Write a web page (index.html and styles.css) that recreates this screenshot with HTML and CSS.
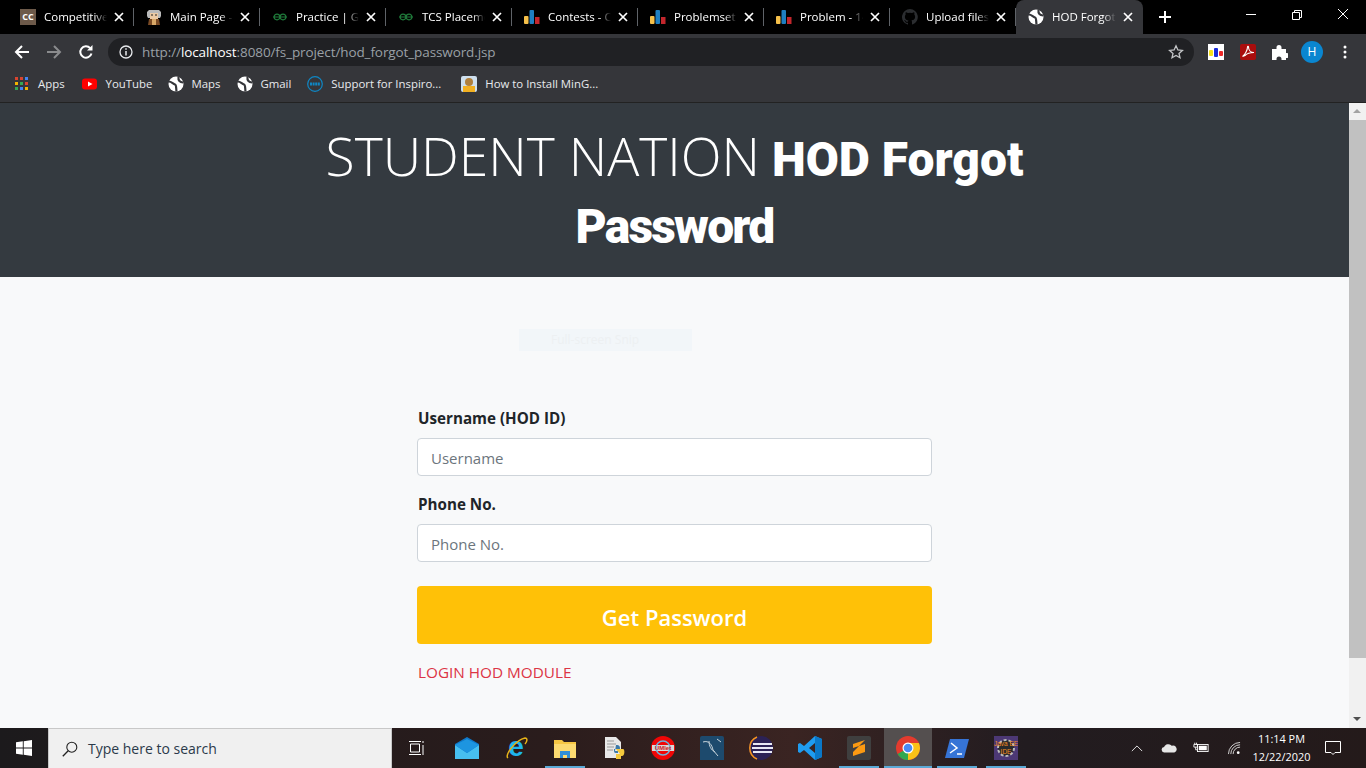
FILE: index.html
```html
<!DOCTYPE html>
<html lang="en">
<head>
    <meta charset="UTF-8">
    <meta name="viewport" content="width=device-width, initial-scale=1.0">
    <title>HOD Forgot Password</title>
    <link rel="stylesheet" href="styles.css">
</head>
<body>
    <svg class="defs" width="0" height="0">
        <symbol id="x" viewBox="0 0 10 10"><path d="M1 1l8 8M9 1l-8 8" stroke="#fff" stroke-width="1.7" fill="none"/></symbol>
        <symbol id="globe" viewBox="0 0 16 16"><circle cx="8" cy="8" r="7.500" fill="#fff"/><path d="M.8 5.500C3.500 5.500 5 8 7 8.500c1.500.5 1 3.500 1.500 7M15 6.500c-3 0-5-2-4.500-5.500" stroke="#35363a" stroke-width="2.200" fill="none"/></symbol>
        <symbol id="gfg" viewBox="0 0 16 16"><path d="M1 8h14M8 8c-.7-4-5.500-3.500-6 0 .5 3.500 5.300 4 6 0 .7 4 5.500 3.500 6 0-.5-3.500-5.300-4-6 0" stroke="#1f7a3a" stroke-width="1.200" fill="none"/></symbol>
        <symbol id="bars" viewBox="0 0 16 16"><rect y="7" width="4.500" height="8" rx="1" fill="#f5c04a"/><rect x="5.500" y="1" width="4.500" height="14" rx="1" fill="#1e7fc1"/><rect x="11" y="8" width="4.500" height="7" fill="#c3262c"/></symbol>
    </svg>

    <div class="chrome">
        <div class="tabs">
            <div class="tab">
                <span class="fav cc">CC</span>
                <span class="tab-title">Competitive Programming</span>
                <svg class="tab-x"><use href="#x"/></svg>
            </div>
            <div class="tab">
                <svg class="fav" viewBox="0 0 16 16"><path d="M1 7V3l2-2h10l2 2v4l-1 2H2z" fill="#b9b9b9"/><rect x="4" y="4" width="8" height="6" fill="#eccaa4"/><path d="M5 6h2M9 6h2" stroke="#222"/><path d="M2 16l1-6h10l1 6z" fill="#7a4a24"/><rect x="6" y="10" width="4" height="6" fill="#d8a868"/></svg>
                <span class="tab-title">Main Page - Wikipedia</span>
                <svg class="tab-x"><use href="#x"/></svg>
            </div>
            <div class="tab">
                <svg class="fav"><use href="#gfg"/></svg>
                <span class="tab-title">Practice | GeeksforGeeks</span>
                <svg class="tab-x"><use href="#x"/></svg>
            </div>
            <div class="tab">
                <svg class="fav"><use href="#gfg"/></svg>
                <span class="tab-title">TCS Placement Paper</span>
                <svg class="tab-x"><use href="#x"/></svg>
            </div>
            <div class="tab">
                <svg class="fav"><use href="#bars"/></svg>
                <span class="tab-title">Contests - Codeforces</span>
                <svg class="tab-x"><use href="#x"/></svg>
            </div>
            <div class="tab">
                <svg class="fav"><use href="#bars"/></svg>
                <span class="tab-title">Problemset - Codeforces</span>
                <svg class="tab-x"><use href="#x"/></svg>
            </div>
            <div class="tab">
                <svg class="fav"><use href="#bars"/></svg>
                <span class="tab-title">Problem - 1466A</span>
                <svg class="tab-x"><use href="#x"/></svg>
            </div>
            <div class="tab">
                <svg class="fav" viewBox="0 0 16 16"><path fill="#2b2d30" d="M8 0a8 8 0 0 0-2.500 15.600c.4.1.5-.2.5-.4v-1.400c-2.200.5-2.700-1-2.700-1-.4-.9-.9-1.200-.9-1.200-.7-.5.1-.5.1-.5.8.1 1.200.8 1.200.8.7 1.200 1.900.9 2.300.7.1-.5.3-.9.5-1.100-1.800-.2-3.600-.9-3.600-4 0-.9.3-1.600.8-2.100-.1-.2-.4-1 .1-2.100 0 0 .7-.2 2.200.8a7.500 7.500 0 0 1 4 0c1.500-1 2.200-.8 2.200-.8.4 1.100.2 1.900.1 2.100.5.6.8 1.300.8 2.100 0 3.100-1.900 3.700-3.700 3.900.3.300.6.700.6 1.500v2.200c0 .2.1.5.600.4A8 8 0 0 0 8 0z"/></svg>
                <span class="tab-title">Upload files to GitHub</span>
                <svg class="tab-x"><use href="#x"/></svg>
            </div>
            <div class="tab active">
                <svg class="fav"><use href="#globe"/></svg>
                <span class="tab-title">HOD Forgot Password</span>
                <svg class="tab-x"><use href="#x"/></svg>
            </div>
            <svg class="new-tab" viewBox="0 0 12 12"><path d="M6 0v12M0 6h12" stroke="#fff" stroke-width="2"/></svg>
            <div class="win-btns">
                <svg class="win-btn" viewBox="0 0 46 30"><path d="M18 14.500h10" stroke="#fff"/></svg>
                <svg class="win-btn" viewBox="0 0 46 30"><path d="M18.500 12.500h7v7h-7zM20.500 12.500v-2h7v7h-2" stroke="#fff" fill="none"/></svg>
                <svg class="win-btn" viewBox="0 0 46 30"><path d="M18 9l10 10M28 9L18 19" stroke="#fff" fill="none"/></svg>
            </div>
        </div>

        <div class="toolbar">
            <svg class="nav-icon" viewBox="0 0 16 16"><path d="M15 8H2M8 2L2 8l6 6" stroke="#fff" stroke-width="2" fill="none"/></svg>
            <svg class="nav-icon" viewBox="0 0 16 16"><path d="M1 8h13M8 2l6 6-6 6" stroke="#8a8b8d" stroke-width="2" fill="none"/></svg>
            <svg class="nav-icon" viewBox="0 0 16 16"><path d="M13.500 9.500a5.700 5.700 0 1 1-1.300-5.400" stroke="#fff" stroke-width="2" fill="none"/><path d="M14.500 1v5.500H9z" fill="#fff"/></svg>
            <div class="omnibox">
                <svg class="info" viewBox="0 0 14 14"><circle cx="7" cy="7" r="6" stroke="#e8eaed" stroke-width="1.300" fill="none"/><path d="M7 6v4.500M7 3.300v1.500" stroke="#e8eaed" stroke-width="1.500"/></svg>
                <span class="url">http://<b>localhost</b>:8080/fs_project/hod_forgot_password.jsp</span>
                <svg class="star" viewBox="0 0 16 16"><path d="M8 1.800l1.900 4.100 4.500.5-3.400 3 1 4.400L8 11.500l-4 2.300 1-4.400-3.400-3 4.500-.5z" stroke="#c4c6c8" stroke-width="1.300" fill="none"/></svg>
            </div>
            <div class="ext-icons">
                <svg class="ext" viewBox="0 0 16 16"><rect width="16" height="16" fill="#fff"/><rect x="1" y="6" width="4" height="6" rx="1" fill="#f7e018"/><rect x="6" y="4" width="4" height="9" rx="1" fill="#1a2bd8"/><rect x="11" y="7" width="4" height="5" rx="1" fill="#ee2a2a"/></svg>
                <svg class="ext" viewBox="0 0 16 16"><rect width="16" height="16" rx="2" fill="#a90d0d"/><path d="M2.500 12.500C5 11 7.500 6 7.500 3c0-1 1-1 1 0 0 3 2 5.500 5.500 5.500-3 0-7 1-9 3z" stroke="#fff" stroke-width="1.100" fill="none"/></svg>
                <svg class="ext" viewBox="0 0 16 16"><path d="M0 5h4.500V3.500a2.500 2.500 0 1 1 5 0V5H14v4h.5a2.500 2.500 0 1 1 0 5H14v2H9.500v-1a2.500 2.500 0 1 0-5 0v1H0z" fill="#fff"/></svg>
                <span class="avatar">H</span>
                <svg class="kebab" viewBox="0 0 4 14"><circle cx="2" cy="2" r="1.500" fill="#fff"/><circle cx="2" cy="7" r="1.500" fill="#fff"/><circle cx="2" cy="12" r="1.500" fill="#fff"/></svg>
            </div>
        </div>

        <div class="bookmarks">
            <div class="bm bm-apps">
                <svg class="bm-icon apps" viewBox="0 0 13 13"><g fill="#d8442f"><rect width="3" height="3"/><rect x="5" width="3" height="3"/></g><rect x="10" width="3" height="3" fill="#4285f4"/><rect y="5" width="3" height="3" fill="#f4b400"/><rect x="5" y="5" width="3" height="3" fill="#34a853"/><rect x="10" y="5" width="3" height="3" fill="#d8442f"/><rect y="10" width="3" height="3" fill="#34a853"/><rect x="5" y="10" width="3" height="3" fill="#4285f4"/><rect x="10" y="10" width="3" height="3" fill="#f4b400"/></svg>
                Apps
            </div>
            <div class="bm bm-yt">
                <svg class="bm-icon" viewBox="0 0 16 16"><rect y="2.500" width="15" height="11" rx="3" fill="#f00"/><path d="M6 5.500v5l4.500-2.500z" fill="#fff"/></svg>
                YouTube
            </div>
            <div class="bm bm-maps"><svg class="bm-icon"><use href="#globe"/></svg>Maps</div>
            <div class="bm bm-gmail"><svg class="bm-icon"><use href="#globe"/></svg>Gmail</div>
            <div class="bm bm-dell">
                <svg class="bm-icon" viewBox="0 0 16 16"><circle cx="8" cy="8" r="7.300" stroke="#0f87c4" stroke-width="1.200" fill="none"/><path d="M3 8h10" stroke="#0f87c4" stroke-width="3" stroke-dasharray="2 .6"/></svg>
                Support for Inspiro...
            </div>
            <div class="bm">
                <svg class="bm-icon" viewBox="0 0 16 16"><rect width="16" height="16" rx="2" fill="#cfe0ee"/><circle cx="8" cy="6" r="4" fill="#b0803c"/><rect x="2" y="10" width="12" height="6" fill="#f2b021"/></svg>
                How to Install MinG...
            </div>
        </div>
    </div>

    <div class="viewport">
        <main class="page">
            <header class="jumbotron">
                <h1 class="title"><span class="brand">STUDENT NATION</span> <b>HOD Forgot <span class="second-line">Password</span></b></h1>
            </header>
            <div class="snip-ghost">Full-screen Snip</div>
            <form class="login-form">
                <label class="field-label" for="username">Username (HOD ID)</label>
                <input class="field-input" id="username" type="text" placeholder="Username">
                <label class="field-label" for="phone">Phone No.</label>
                <input class="field-input" id="phone" type="text" placeholder="Phone No.">
                <button class="submit-btn" type="button">Get Password</button>
                <a class="module-link" href="#">LOGIN HOD MODULE</a>
            </form>
        </main>
        <div class="scrollbar">
            <span class="arrow up"></span>
            <span class="thumb"></span>
            <span class="arrow down"></span>
        </div>
    </div>

    <footer class="taskbar">
        <div class="start">
            <svg class="win-logo" viewBox="0 0 16 16"><path d="M0 2.300l6.800-1v6.200H0zM7.700 1.200L16 0v7.500H7.700zM0 8.400h6.800v6.300l-6.800-1zM7.700 8.400H16V16l-8.300-1.200z" fill="#fff"/></svg>
        </div>
        <div class="search">
            <svg class="search-icon" viewBox="0 0 16 16"><circle cx="9.800" cy="6.200" r="5" stroke="#222" stroke-width="1.100" fill="none"/><path d="M6.200 9.800L.8 15.200" stroke="#222" stroke-width="1.300"/></svg>
            Type here to search
        </div>
        <div class="task-apps">
            <div class="app task-view">
                <svg viewBox="0 0 16 16"><path d="M2.500 4h9v8h-9zM1 1.500h12M1 14.500h12M15 1v2M15 5v10" stroke="#fff" fill="none"/></svg>
            </div>
            <div class="app">
                <svg viewBox="0 0 24 24"><path d="M0 8l12-7 12 7v15H0z" fill="#0f78c9"/><path d="M0 9l12 8 12-8v14H0z" fill="#47bff0"/><path d="M0 9l12 8 12-8-12-6z" fill="#1d95e0"/></svg>
            </div>
            <div class="app">
                <svg viewBox="0 0 24 24"><text x="12" y="20" text-anchor="middle" class="ie-e">e</text><path d="M4 22C0 19 12 4 21 2c3 0 2 4 0 6" fill="none" stroke="#e8b418" stroke-width="1.500"/></svg>
            </div>
            <div class="app open">
                <svg viewBox="0 0 24 24"><path d="M1 4h8l2 2h12v16H1z" fill="#f6c744"/><path d="M1 8h22v14H1z" fill="#fcdb71"/><path d="M7 15h10v7h-3v-3h-4v3H7z" fill="#2f8fd8"/></svg>
            </div>
            <div class="app">
                <svg viewBox="0 0 24 24"><path d="M3 1h11l5 5v16H3z" fill="#e8e8e8"/><path d="M5 5h7M5 8h9M5 11h7M5 14h6" stroke="#999"/><path d="M14 9c4 0 4 2 4 4h-6c0 3 0 4 2 4h2v-2h-3" fill="#3b78a8"/><path d="M14 13h7c2 0 2 7-1 7h-1v3h-5v-5h4z" fill="#f5c93d"/></svg>
            </div>
            <div class="app">
                <svg viewBox="0 0 24 24"><circle cx="12" cy="12" r="12" fill="#f00606"/><rect x="1" y="9" width="22" height="6" fill="#d8d8d8"/><circle cx="12" cy="12" r="7" fill="none" stroke="#6fb1d8" stroke-width="1.500"/><text x="12" y="14" text-anchor="middle" class="uml">UMlet</text></svg>
            </div>
            <div class="app">
                <svg viewBox="0 0 24 24"><rect width="24" height="26" rx="2" fill="#1d4a6d"/><path d="M3 6c6-2 9 3 10 8l5 6M9 5c0 5 2 9 6 11M17 3l4 3" stroke="#c8d4dc" fill="none"/></svg>
            </div>
            <div class="app">
                <svg viewBox="0 0 24 24"><circle cx="12" cy="12" r="12" fill="#2c2255"/><path d="M8 1a12 12 0 0 0 0 22" stroke="#f7941e" stroke-width="1.500" fill="none"/><path d="M4 8h19M3 12h21M4 16h19" stroke="#e8e8f4" stroke-width="2"/></svg>
            </div>
            <div class="app">
                <svg viewBox="0 0 24 24"><path d="M17 0l7 3v18l-7 3L6 14l-4 3-2-1V8l2-1 4 3zM17 7l-6 5 6 5z" fill="#1f9cf0"/><path d="M17 0l7 3v18l-7 3z" fill="#0a78c8"/></svg>
            </div>
            <div class="app open">
                <svg viewBox="0 0 24 24"><rect width="24" height="24" rx="2" fill="#3f3f3f"/><path d="M18 4L6 8v4l12 4-12 4v-4M6 12l12-4v8" fill="#fb9a12"/></svg>
            </div>
            <div class="app active open">
                <svg viewBox="0 0 24 24"><circle cx="12" cy="12" r="12" fill="#e33b2e"/><path d="M12 12L1.600 18A12 12 0 0 0 14 23.800z" fill="#2fa84f"/><path d="M12 7h10.900A12 12 0 0 1 12 24z" fill="#fbc116"/><circle cx="12" cy="12" r="5.500" fill="#fff"/><circle cx="12" cy="12" r="4.300" fill="#4a8af4"/></svg>
            </div>
            <div class="app open">
                <svg viewBox="0 0 24 24"><path d="M5 3h19l-5 19H0z" fill="#3674d6"/><path d="M6 7l6 5-7 5M12 18h5" stroke="#fff" stroke-width="1.500" fill="none"/></svg>
            </div>
            <div class="app open">
                <svg viewBox="0 0 24 24"><rect width="24" height="24" fill="#4c3875"/><circle cx="12" cy="12" r="8" fill="#2a2a2a" stroke="#bbb" stroke-width="2" stroke-dasharray="3 2"/><text x="12" y="10" text-anchor="middle" class="java">Java EE</text><text x="12" y="18" text-anchor="middle" class="java">IDE</text></svg>
            </div>
        </div>
        <div class="tray">
            <svg class="tray-icon caret" viewBox="0 0 14 8"><path d="M1 7l6-6 6 6" stroke="#fff" fill="none"/></svg>
            <svg class="tray-icon cloud" viewBox="0 0 18 12"><path d="M4 11a3 3 0 0 1-.5-6A5 5 0 0 1 12 3.500 4 4 0 0 1 15 11z" fill="#e6e6e6"/></svg>
            <svg class="tray-icon batt" viewBox="0 0 18 12"><rect x="5" y="2" width="12" height="8" fill="none" stroke="#fff"/><rect x="6.500" y="3.500" width="9" height="5" fill="#fff"/><path d="M1 2h4v3H1zM3 5v3h2M2 0v2M4 0v2" stroke="#fff" fill="none"/></svg>
            <svg class="tray-icon wifi" viewBox="0 0 14 14"><path d="M.5 13A12.500 12.500 0 0 1 13 .5M3 13a10 10 0 0 1 10-10M5.500 13A7.500 7.500 0 0 1 13 5.500" stroke="#ddd" fill="none"/><circle cx="11" cy="11.500" r="1.500" fill="#fff"/></svg>
            <div class="clock"><span>11:14 PM</span><span>12/22/2020</span></div>
            <svg class="notify" viewBox="0 0 16 16"><path d="M.5 1.500h15v11H10l-2 2-2-2H.5z" stroke="#fff" fill="none"/></svg>
        </div>
    </footer>
</body>
</html>
```

FILE: styles.css
```css
* {
    box-sizing: border-box;
}
html, body {
    margin: 0;
    height: 100%;
    overflow: hidden;
}
body {
    display: flex;
    flex-direction: column;
    width: 1366px;
    height: 768px;
    font-family: "Open Sans", "Noto Sans", sans-serif;
}
.defs {
    display: none;
}

/* browser top */
.chrome {
    height: 103px;
    flex: none;
    background: #35363a;
    color: #fff;
    border-bottom: 1px solid #222;
}
.tabs {
    display: flex;
    align-items: center;
    height: 34px;
    padding-left: 8px;
    background: #000;
    font-size: 11.500px;
}
.tab {
    display: flex;
    align-items: center;
    width: 126px;
    height: 34px;
    padding: 0 7px 0 12px;
    position: relative;
}
.tab::after {
    content: "";
    position: absolute;
    right: 0;
    top: 8px;
    height: 18px;
    width: 1px;
    background: #5f6368;
}
.tab.active {
    background: #35363a;
    border-radius: 8px 8px 0 0;
    width: 127px;
}
.tab.active::after {
    display: none;
}
.fav {
    width: 16px;
    height: 16px;
    flex: none;
    margin-right: 8px;
}
.cc {
    background: #6d5a4a;
    font-size: 9px;
    font-weight: 700;
    line-height: 16px;
    text-align: center;
    color: #fff;
}
.tab-title {
    flex: 1;
    margin-top: -2px;
    white-space: nowrap;
    overflow: hidden;
    color: #fff;
    -webkit-mask-image: linear-gradient(90deg, #000 80%, transparent 100%);
    mask-image: linear-gradient(90deg, #000 80%, transparent 100%);
}
.tab-x {
    width: 10px;
    height: 10px;
    flex: none;
    margin-left: 7px;
    margin-right: 3px;
}
.new-tab {
    width: 12px;
    height: 12px;
    margin-left: 16px;
}
.win-btns {
    display: flex;
    margin-left: auto;
    align-self: flex-start;
}
.win-btn {
    width: 46px;
    height: 30px;
    display: block;
}

.toolbar {
    display: flex;
    align-items: center;
    height: 33px;
    padding: 3px 0 0 14px;
}
.nav-icon {
    width: 16px;
    height: 16px;
    margin-right: 16px;
}
.omnibox {
    display: flex;
    align-items: center;
    width: 1086px;
    height: 28px;
    margin-left: -2px;
    padding: 0 10px 0 11px;
    border-radius: 14px;
    background: #202124;
}
.info {
    width: 14px;
    height: 14px;
    margin-right: 9px;
}
.url {
    flex: 1;
    font-size: 13.500px;
    color: #9aa0a6;
    letter-spacing: -.1px;
}
.url b {
    font-weight: 400;
    color: #fff;
}
.star {
    width: 16px;
    height: 16px;
}
.ext-icons {
    display: flex;
    align-items: center;
    margin-left: 14px;
}
.ext {
    width: 16px;
    height: 16px;
    margin-right: 16px;
}
.avatar {
    width: 22px;
    height: 22px;
    border-radius: 50%;
    margin-left: -3px;
    background: #0a86d0;
    font-size: 12px;
    line-height: 22px;
    text-align: center;
}
.kebab {
    width: 4px;
    height: 14px;
    margin-left: 20px;
}

.bookmarks {
    display: flex;
    align-items: center;
    height: 33px;
    padding-left: 15px;
    font-size: 11.400px;
    color: #e8eaed;
}
.bm {
    display: flex;
    align-items: center;
    margin-right: 17px;
}
.bm-icon {
    width: 16px;
    height: 16px;
    margin-right: 8px;
}
.apps {
    width: 13px;
    height: 13px;
    margin-right: 10px;
}
.bm-yt,
.bm-gmail {
    margin-right: 16px;
}
.bm-maps .bm-icon,
.bm-gmail .bm-icon {
    margin-right: 7px;
}
.bm-dell {
    margin-right: 20px;
}

/* page */
.viewport {
    flex: 1;
    display: flex;
    min-height: 0;
}
.page {
    flex: 1;
    background: #f8f9fa;
    overflow: hidden;
}
.jumbotron {
    height: 174px;
    padding: 19px 300px 0;
    background: #343a40;
    color: #fff;
    text-align: center;
}
.title {
    margin: 0;
    font-family: Roboto, "Open Sans", sans-serif;
    font-size: 48px;
    font-weight: 700;
    line-height: 67px;
}
.brand {
    font-family: "Open Sans", sans-serif;
    font-size: 53.400px;
    font-weight: 300;
}
.second-line {
    letter-spacing: -1.800px;
}
.snip-ghost {
    width: 173px;
    height: 22px;
    margin: 52px 0 0 519px;
    padding-left: 32px;
    background: #f2f6f9;
    color: #edf0f2;
    font-size: 12px;
    line-height: 22px;
}
.login-form {
    display: flex;
    flex-direction: column;
    width: 515px;
    margin: 55px 0 0 417px;
}
.field-label {
    margin-bottom: 8px;
    padding-left: 1px;
    color: #212529;
    font-size: 15.200px;
    font-weight: 700;
    line-height: 24px;
}
.field-input {
    height: 38px;
    margin-bottom: 16px;
    padding: 7px 13px 5px;
    border: 1px solid #ced4da;
    border-radius: 4px;
    background: #fff;
    font-family: inherit;
    font-size: 15px;
}
.field-input::placeholder {
    color: #6c757d;
}
.submit-btn {
    height: 58px;
    margin-top: 8px;
    padding-top: 5px;
    border: none;
    border-radius: 4px;
    background: #ffc107;
    color: #fff;
    font-family: inherit;
    font-size: 22px;
    font-weight: 600;
}
.module-link {
    margin-top: 16px;
    padding-left: 1px;
    color: #dc3545;
    font-size: 15.300px;
    line-height: 24px;
    text-decoration: none;
}
.scrollbar {
    display: flex;
    flex-direction: column;
    width: 17px;
    background: #f1f1f1;
}
.arrow {
    height: 17px;
    flex: none;
    position: relative;
}
.arrow::after {
    content: "";
    position: absolute;
    left: 4px;
    top: 6px;
    border: 4px solid transparent;
    border-top: 0;
    border-bottom: 4px solid #a3a3a3;
}
.arrow.down {
    margin-top: auto;
}
.arrow.down::after {
    border-bottom: 0;
    border-top: 4px solid #505050;
}
.thumb {
    height: 538px;
    background: #c1c1c1;
}

/* windows taskbar */
.taskbar {
    display: flex;
    height: 40px;
    flex: none;
    background: linear-gradient(90deg, #1c1a1c 0%, #2a1c1c 40%, #3a2422 58%, #221c20 75%, #241a1a 100%);
    color: #fff;
}
.start {
    display: flex;
    align-items: center;
    justify-content: center;
    width: 48px;
}
.win-logo {
    width: 16px;
    height: 16px;
}
.search {
    display: flex;
    align-items: center;
    width: 344px;
    padding-left: 13px;
    background: #f0f0f0;
    border: 1px solid #c8c8c8;
    border-bottom: 0;
    color: #2b3a4a;
    font-size: 14px;
}
.search-icon {
    width: 16px;
    height: 16px;
    margin-right: 10px;
}
.task-apps {
    display: flex;
}
.app {
    display: flex;
    align-items: center;
    justify-content: center;
    width: 48px;
    margin-right: 1px;
    position: relative;
}
.app.open::after {
    content: "";
    position: absolute;
    left: 4px;
    right: 4px;
    bottom: 0;
    height: 2px;
    background: #5aa9d6;
}
.app.active {
    background: #544f4f;
}
.app.active::after {
    left: 0;
    right: 0;
}
.app svg {
    width: 24px;
    height: 24px;
}
.task-view {
    margin-right: 3px;
}
.app.task-view svg {
    width: 16px;
    height: 16px;
}
.ie-e {
    font-family: "Liberation Sans", sans-serif;
    font-size: 28px;
    font-weight: 700;
    fill: #1eb6ee;
}
.uml {
    font-family: "Liberation Sans", sans-serif;
    font-size: 6px;
    font-weight: 700;
    fill: #d01818;
}
.java {
    font-family: "Liberation Sans", sans-serif;
    font-size: 6.500px;
    fill: #f58a1f;
}
.tray {
    display: flex;
    align-items: center;
    flex: 1;
    padding-left: 100px;
}
.tray-icon {
    flex: none;
}
.caret {
    width: 12px;
    height: 7px;
    margin-right: 18px;
}
.cloud {
    width: 16px;
    height: 12px;
    margin-right: 16px;
}
.batt {
    width: 16px;
    height: 12px;
    margin-right: 19px;
}
.wifi {
    width: 13px;
    height: 13px;
    margin-right: 11px;
}
.clock {
    display: flex;
    flex-direction: column;
    align-items: center;
    width: 59px;
    font-size: 10.900px;
    line-height: 18px;
}
.notify {
    width: 16px;
    height: 16px;
    margin-left: 14px;
}
```
